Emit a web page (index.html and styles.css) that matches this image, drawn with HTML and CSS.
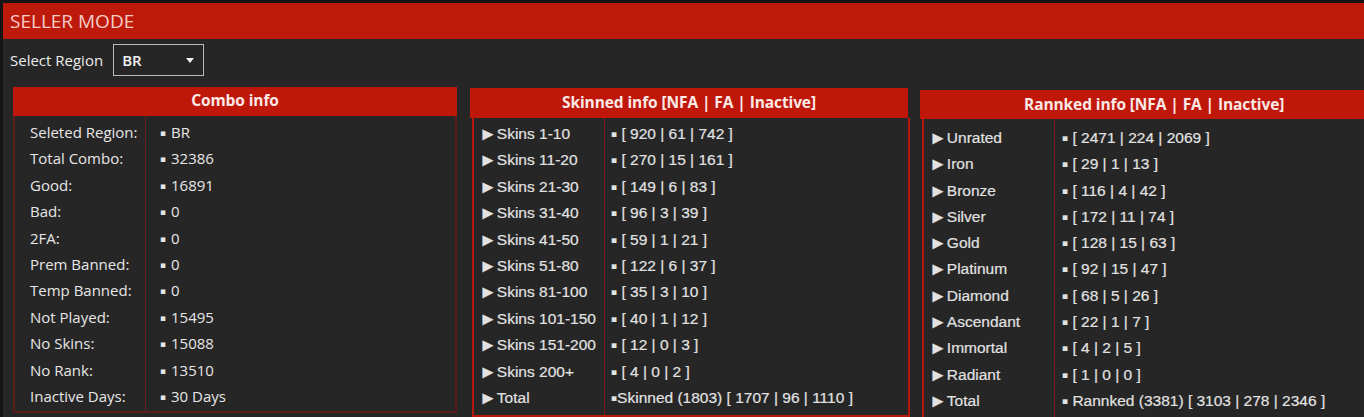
FILE: index.html
```html
<!DOCTYPE html>
<html lang="en">
<head>
<meta charset="utf-8">
<title>Seller Mode</title>
<link rel="stylesheet" href="styles.css">
</head>
<body>
<div class="app">
  <header class="titlebar">SELLER MODE</header>

  <div class="toolbar">
    <span class="toolbar-label">Select Region</span>
    <div class="select">
      <span class="select-value">BR</span>
      <span class="select-caret"></span>
    </div>
  </div>

  <div class="panels">
    <section class="panel panel-combo">
      <h2 class="panel-title">Combo info</h2>
      <div class="panel-body">
        <div class="col col-keys">
          <div class="row">Seleted Region:</div>
          <div class="row">Total Combo:</div>
          <div class="row">Good:</div>
          <div class="row">Bad:</div>
          <div class="row">2FA:</div>
          <div class="row">Prem Banned:</div>
          <div class="row">Temp Banned:</div>
          <div class="row">Not Played:</div>
          <div class="row">No Skins:</div>
          <div class="row">No Rank:</div>
          <div class="row">Inactive Days:</div>
        </div>
        <div class="col col-vals">
          <div class="row"><span class="dot">▪</span> BR</div>
          <div class="row"><span class="dot">▪</span> 32386</div>
          <div class="row"><span class="dot">▪</span> 16891</div>
          <div class="row"><span class="dot">▪</span> 0</div>
          <div class="row"><span class="dot">▪</span> 0</div>
          <div class="row"><span class="dot">▪</span> 0</div>
          <div class="row"><span class="dot">▪</span> 0</div>
          <div class="row"><span class="dot">▪</span> 15495</div>
          <div class="row"><span class="dot">▪</span> 15088</div>
          <div class="row"><span class="dot">▪</span> 13510</div>
          <div class="row"><span class="dot">▪</span> 30 Days</div>
        </div>
      </div>
    </section>

    <section class="panel panel-skins">
      <h2 class="panel-title">Skinned info [NFA | FA | Inactive]</h2>
      <div class="panel-body">
        <div class="col col-keys">
          <div class="row"><span class="arrow">►</span>Skins 1-10</div>
          <div class="row"><span class="arrow">►</span>Skins 11-20</div>
          <div class="row"><span class="arrow">►</span>Skins 21-30</div>
          <div class="row"><span class="arrow">►</span>Skins 31-40</div>
          <div class="row"><span class="arrow">►</span>Skins 41-50</div>
          <div class="row"><span class="arrow">►</span>Skins 51-80</div>
          <div class="row"><span class="arrow">►</span>Skins 81-100</div>
          <div class="row"><span class="arrow">►</span>Skins 101-150</div>
          <div class="row"><span class="arrow">►</span>Skins 151-200</div>
          <div class="row"><span class="arrow">►</span>Skins 200+</div>
          <div class="row"><span class="arrow">►</span>Total</div>
        </div>
        <div class="col col-vals">
          <div class="row"><span class="dot">▪</span> [ 920 | 61 | 742 ]</div>
          <div class="row"><span class="dot">▪</span> [ 270 | 15 | 161 ]</div>
          <div class="row"><span class="dot">▪</span> [ 149 | 6 | 83 ]</div>
          <div class="row"><span class="dot">▪</span> [ 96 | 3 | 39 ]</div>
          <div class="row"><span class="dot">▪</span> [ 59 | 1 | 21 ]</div>
          <div class="row"><span class="dot">▪</span> [ 122 | 6 | 37 ]</div>
          <div class="row"><span class="dot">▪</span> [ 35 | 3 | 10 ]</div>
          <div class="row"><span class="dot">▪</span> [ 40 | 1 | 12 ]</div>
          <div class="row"><span class="dot">▪</span> [ 12 | 0 | 3 ]</div>
          <div class="row"><span class="dot">▪</span> [ 4 | 0 | 2 ]</div>
          <div class="row"><span class="dot">▪</span>Skinned (1803) [ 1707 | 96 | 1110 ]</div>
        </div>
      </div>
    </section>

    <section class="panel panel-ranks">
      <h2 class="panel-title">Rannked info [NFA | FA | Inactive]</h2>
      <div class="panel-body">
        <div class="col col-keys">
          <div class="row"><span class="arrow">►</span>Unrated</div>
          <div class="row"><span class="arrow">►</span>Iron</div>
          <div class="row"><span class="arrow">►</span>Bronze</div>
          <div class="row"><span class="arrow">►</span>Silver</div>
          <div class="row"><span class="arrow">►</span>Gold</div>
          <div class="row"><span class="arrow">►</span>Platinum</div>
          <div class="row"><span class="arrow">►</span>Diamond</div>
          <div class="row"><span class="arrow">►</span>Ascendant</div>
          <div class="row"><span class="arrow">►</span>Immortal</div>
          <div class="row"><span class="arrow">►</span>Radiant</div>
          <div class="row"><span class="arrow">►</span>Total</div>
        </div>
        <div class="col col-vals">
          <div class="row"><span class="dot">▪</span> [ 2471 | 224 | 2069 ]</div>
          <div class="row"><span class="dot">▪</span> [ 29 | 1 | 13 ]</div>
          <div class="row"><span class="dot">▪</span> [ 116 | 4 | 42 ]</div>
          <div class="row"><span class="dot">▪</span> [ 172 | 11 | 74 ]</div>
          <div class="row"><span class="dot">▪</span> [ 128 | 15 | 63 ]</div>
          <div class="row"><span class="dot">▪</span> [ 92 | 15 | 47 ]</div>
          <div class="row"><span class="dot">▪</span> [ 68 | 5 | 26 ]</div>
          <div class="row"><span class="dot">▪</span> [ 22 | 1 | 7 ]</div>
          <div class="row"><span class="dot">▪</span> [ 4 | 2 | 5 ]</div>
          <div class="row"><span class="dot">▪</span> [ 1 | 0 | 0 ]</div>
          <div class="row"><span class="dot">▪</span> Rannked (3381) [ 3103 | 278 | 2346 ]</div>
        </div>
      </div>
    </section>
  </div>
</div>
</body>
</html>
```

FILE: styles.css
```css
html, body {
  margin: 0;
  padding: 0;
  height: 100%;
  overflow: hidden;
}

body {
  background: #262626;
  border-left: 3px solid #141414;
  border-top: 3px solid #141414;
  box-sizing: border-box;
  color: #e4e4e4;
  font-family: "Open Sans", "Noto Sans", sans-serif;
}

.app {
  width: 1400px;
}

/* window title bar */
.titlebar {
  height: 36px;
  background: #bd1a0b;
  color: #f6cdc6;
  font-size: 19px;
  line-height: 36px;
  padding-left: 7px;
}

/* region selector */
.toolbar {
  display: flex;
  align-items: center;
  gap: 10px;
  padding: 5px 0 0 7px;
  height: 32px;
}

.toolbar-label {
  font-size: 15px;
  color: #ececec;
}

.select {
  box-sizing: border-box;
  width: 91px;
  height: 32px;
  border: 1px solid #b9b9b9;
  display: flex;
  align-items: center;
  justify-content: space-between;
  padding: 0 9px 0 8px;
}

.select-value {
  font-size: 15px;
  font-weight: 600;
  color: #f2f2f2;
}

.select-caret {
  width: 0;
  height: 0;
  border-left: 4px solid transparent;
  border-right: 4px solid transparent;
  border-top: 5px solid #f2f2f2;
}

/* info panels */
.panels {
  display: flex;
  align-items: flex-start;
  padding: 11px 0 0 10px;
}

.panel-title {
  margin: 0;
  height: 30px;
  background: #c0170b;
  color: #fbe9e6;
  font-family: "Open Sans", "Noto Sans", sans-serif;
  font-size: 15.5px;
  font-weight: 700;
  letter-spacing: -0.1px;
  line-height: 28px;
  text-align: center;
}

.panel-body {
  display: flex;
  border: 2px solid #b4180c;
  border-top: none;
}

.col-keys {
  width: 130px;
  flex: none;
  border-right: 1px solid #7a1c14;
}

.col-vals {
  flex: 1;
}

.row {
  height: 26.4px;
  line-height: 26.4px;
  white-space: nowrap;
}

.dot {
  font-family: "DejaVu Sans", sans-serif;
  font-size: 9px;
  vertical-align: 2px;
}

.arrow {
  font-size: 18px;
  line-height: 0;
  vertical-align: -1px;
  margin-left: -3px;
}

/* Combo info */
.panel-combo {
  width: 444px;
}

.panel-combo .panel-title {
  height: 29px;
  line-height: 27px;
}

.panel-combo .panel-body {
  border-color: #5b1d18;
}

.panel-combo .col {
  padding-top: 3px;
  padding-bottom: 2px;
  font-size: 15px;
  color: #e6e6e6;
}

.panel-combo .col-keys {
  border-right-color: #66201a;
  padding-left: 15px;
  width: 115px;
}

.panel-combo .col-vals {
  padding-left: 14px;
}

.panel-combo .dot {
  margin-right: 1px;
}

/* Skinned + ranked */
.panel-skins,
.panel-ranks {
  font-family: "Liberation Sans", Arial, sans-serif;
  font-size: 15.5px;
  color: #e2e2e2;
  -webkit-text-stroke: 0.2px #e2e2e2;
}

.panel-skins .panel-title,
.panel-ranks .panel-title {
  -webkit-text-stroke: 0;
}

.panel-skins {
  width: 438px;
  margin: 1px 0 0 13px;
}

.panel-skins .panel-body,
.panel-ranks .panel-body {
  margin: 0 -2px 0 2px;
}

.panel-skins .col,
.panel-ranks .col {
  padding-top: 3px;
  padding-bottom: 4px;
}

.panel-skins .col-keys,
.panel-ranks .col-keys {
  padding-left: 8px;
  width: 122px;
}

.panel-skins .col-vals {
  padding-left: 6px;
}

.panel-ranks {
  width: 450px;
  margin: 3px 0 0 12px;
}

.panel-ranks .panel-title {
  height: 29px;
  line-height: 28px;
  text-align: left;
  padding-left: 104px;
}

.panel-ranks .row {
  height: 26.3px;
  line-height: 26.3px;
}

.panel-ranks .col {
  padding-top: 6px;
}

.panel-ranks .col-vals {
  padding-left: 7px;
}
```
